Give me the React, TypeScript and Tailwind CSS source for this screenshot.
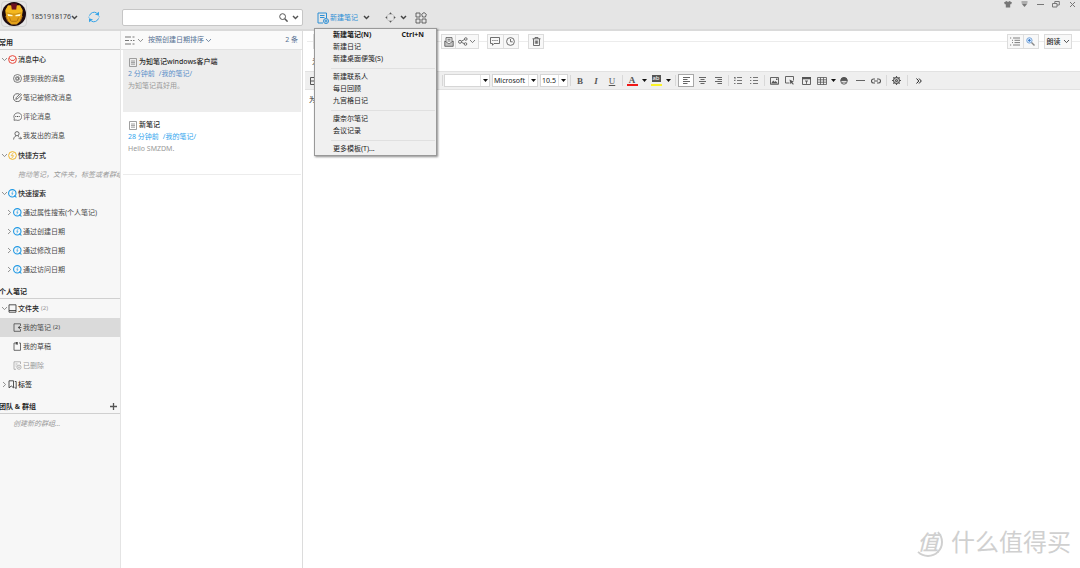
import React from "react";
import type { ReactNode } from "react";

type IconProps = { w?: number; h?: number; className?: string; sw?: number; children: ReactNode };

function Icon({ w = 10, h = 10, className = "", sw = 1, children }: IconProps) {
  return (
    <svg
      width={w}
      height={h}
      viewBox={`0 0 ${w} ${h}`}
      fill="none"
      stroke="currentColor"
      strokeWidth={sw}
      className={`shrink-0 ${className}`}
      aria-hidden="true"
    >
      {children}
    </svg>
  );
}

const Chevron = ({ bold = false }: { bold?: boolean }) => (
  <Icon w={7} h={5} sw={bold ? 1.4 : 0.8}>
    <path d="M1 1l2.5 2.6L6 1" />
  </Icon>
);

const ChevronRight = () => (
  <Icon w={5} h={7} sw={0.8}>
    <path d="M1 1l2.6 2.5L1 6" />
  </Icon>
);

const Caret = () => (
  <Icon w={5} h={3}>
    <path d="M0 0h5L2.5 3z" fill="#111" stroke="none" />
  </Icon>
);

const Avatar = () => (
  <svg width="24" height="24" viewBox="0 0 24 24" aria-hidden="true">
    <circle cx="12" cy="12" r="12" fill="#1c0a10" />
    <path d="M6 3.500h12l2.500 4.500-.5 7-2.500 5-3 2.500h-5l-3-2.500L4 15l-.5-7z" fill="#e3a018" />
    <path d="M3.500 8L6 3.500h3.200l.6 4.500 4.400 0 .6-4.500H18L20.500 8l-.3 3.500-6 1.500H9.800l-6-1.500z" fill="#f4b81e" />
    <path d="M9 1.500h6L14.200 7.500H9.800z" fill="#6d1122" />
    <path d="M5.500 12l5 .9v1.300l-4.400-.3zM18.500 12l-5 .9v1.300l4.400-.3z" fill="#fffbd6" />
    <path d="M4.500 10.800l6 1.400h3l6-1.400" fill="none" stroke="#a8690c" strokeWidth=".6" />
    <path d="M9.200 19.300h5.600M7.500 15.500l1.300 3.500M16.500 15.500l-1.300 3.500" fill="none" stroke="#a8690c" strokeWidth=".7" />
    <path d="M3.700 14l2 5.500M20.300 14l-2 5.500" stroke="#b5701a" strokeWidth=".9" />
  </svg>
);

const MessageCenterIcon = () => (
  <Icon w={9} h={9} className="text-[#e8483c]" sw={1}>
    <circle cx="4.500" cy="4.500" r="3.900" />
    <path d="M1 3.200l2 2.200h3L8 3.200" />
  </Icon>
);
const AtIcon = () => (
  <Icon w={9} h={9} sw={0.7}>
    <circle cx="4.500" cy="4.500" r="4" />
    <circle cx="4.300" cy="4.600" r="1.200" />
    <path d="M5.500 3.200v2.200c0 .8 1.100.6 1.100-.7A2.200 2.200 0 1 0 5.600 6.500" strokeWidth=".5" />
  </Icon>
);
const EditedIcon = () => (
  <Icon w={9} h={9} sw={0.8}>
    <path d="M6 1A4 4 0 1 0 8.300 4" />
    <path d="M2.800 6.300l.5-1.700 4-4 1.200 1.200-4 4z" />
  </Icon>
);
const CommentIcon = () => (
  <Icon w={9} h={9} sw={0.7}>
    <path d="M1 8.300l.3-1.900A4 3.800 0 1 1 3 8z" />
    <path d="M2.300 4.500h1M4 4.500h1M5.700 4.500h1" strokeWidth="1" />
  </Icon>
);
const PersonIcon = () => (
  <Icon w={9} h={9} sw={0.8}>
    <circle cx="4" cy="2.700" r="2.100" />
    <path d="M.6 8.500c.2-2 1-3 2.400-3.700M5 4.800l1 .9M5.500 7.200h3M7.300 6l1.200 1.200-1.200 1.200" />
  </Icon>
);
const BoltIcon = () => (
  <Icon w={9} h={9} className="text-[#f0b429]" sw={1}>
    <circle cx="4.500" cy="4.500" r="3.900" />
    <path d="M5.300 1.800L3.200 4.700h2.400L3.700 7.300" strokeWidth=".8" />
  </Icon>
);
const QuickSearchIcon = () => (
  <Icon w={9} h={9} className="text-[#1e98e4]" sw={1.1}>
    <circle cx="4.300" cy="4.300" r="3.700" />
    <path d="M5 2.200L3.700 4.400h1.300L3.800 6.400" strokeWidth=".6" />
    <path d="M6 6.800l2.500 1.600" />
  </Icon>
);
const FolderIcon = () => (
  <Icon w={9} h={9} sw={0.8}>
    <path d="M1 .8h7v5.700H1zM1 6.500v1.700h7V6.500" />
  </Icon>
);
const MyNotesIcon = () => (
  <Icon w={9} h={9} sw={0.8}>
    <path d="M7.500 3V.8H1v7.500h6.500V6M8.500 4.500H5.500" />
    <path d="M6.800 2.800L4.800 4.500l2 1.700z" fill="currentColor" stroke="none" />
  </Icon>
);
const DraftIcon = () => (
  <Icon w={9} h={9} sw={0.8}>
    <path d="M3.500 1H1v7.300h6.500V1H6" />
    <path d="M2.800 0v3l1-.7 1 .7V0z" fill="currentColor" stroke="none" />
  </Icon>
);
const DeletedIcon = () => (
  <Icon w={9} h={9} sw={0.7}>
    <path d="M3 8.300H1V.8h6.500V3M2.500 3h2M2.500 5h1" />
    <circle cx="6" cy="6.200" r="2.100" />
    <path d="M5 6.200h2" />
  </Icon>
);
const TagIcon = () => (
  <Icon w={9} h={9} sw={0.8}>
    <path d="M1 .8h4.500v7L3.300 6 1 7.800zM6.800 1.500h1.400v7L6.500 7.300" />
  </Icon>
);
const NoteIcon = () => (
  <Icon w={8} h={9} sw={0.8} className="text-[#888]">
    <path d="M.5.5h7v8h-7zM2 3h4M2 4.600h4M2 6.200h4" />
  </Icon>
);

type RowProps = {
  label: string;
  icon: ReactNode;
  child?: boolean;
  arrow?: "down" | "right";
  count?: string;
  active?: boolean;
  faded?: boolean;
};

function TreeRow({ label, icon, child, arrow, count, active, faded }: RowProps) {
  return (
    <li>
      <button
        className={`flex h-[19px] w-full items-center whitespace-nowrap ${child ? "pl-[5px]" : "font-medium"} ${
          active ? "bg-[#dadada]" : ""
        } ${faded ? "text-[#999]" : child ? "text-[#4a4a4a]" : "text-[#2a2a2a]"}`}
      >
        <span className="flex w-2 shrink-0 items-center justify-center text-[#777]">
          {arrow === "down" && <Chevron />}
          {arrow === "right" && <ChevronRight />}
        </span>
        {icon}
        <span className="pl-px">{label}</span>
        {count && <span className={`pl-0.5 text-[6px] font-normal ${child ? "" : "text-[#999]"}`}>{count}</span>}
      </button>
    </li>
  );
}

function Heading({ children, first }: { children: ReactNode; first?: boolean }) {
  return (
    <h2
      className={`-ml-px flex items-end justify-between border-b border-[#d0d0d0] font-bold text-[#2a2a2a] ${
        first ? "h-[19px]" : "h-5"
      }`}
    >
      {children}
    </h2>
  );
}

function Hint({ children }: { children: ReactNode }) {
  return <p className="h-[19px] overflow-hidden leading-[19px] whitespace-nowrap text-[#999] italic">{children}</p>;
}

function Sidebar() {
  return (
    <nav className="w-[121px] shrink-0 overflow-hidden border-r border-[#e4e4e4] bg-[#f7f7f7] leading-[13px]">
      <Heading first>常用</Heading>
      <ul>
        <TreeRow label="消息中心" icon={<MessageCenterIcon />} arrow="down" />
        <TreeRow label="提到我的消息" icon={<AtIcon />} child />
        <TreeRow label="笔记被修改消息" icon={<EditedIcon />} child />
        <TreeRow label="评论消息" icon={<CommentIcon />} child />
        <TreeRow label="我发出的消息" icon={<PersonIcon />} child />
      </ul>
      <ul className="pt-px">
        <TreeRow label="快捷方式" icon={<BoltIcon />} arrow="down" />
        <li className="pl-[18px]">
          <Hint>拖动笔记，文件夹，标签或者群组</Hint>
        </li>
        <TreeRow label="快速搜索" icon={<QuickSearchIcon />} arrow="down" />
        <TreeRow label="通过属性搜索(个人笔记)" icon={<QuickSearchIcon />} child arrow="right" />
        <TreeRow label="通过创建日期" icon={<QuickSearchIcon />} child arrow="right" />
        <TreeRow label="通过修改日期" icon={<QuickSearchIcon />} child arrow="right" />
        <TreeRow label="通过访问日期" icon={<QuickSearchIcon />} child arrow="right" />
      </ul>
      <Heading>个人笔记</Heading>
      <ul>
        <TreeRow label="文件夹" icon={<FolderIcon />} arrow="down" count="(2)" />
        <TreeRow label="我的笔记" icon={<MyNotesIcon />} child active count="(2)" />
        <TreeRow label="我的草稿" icon={<DraftIcon />} child />
        <TreeRow label="已删除" icon={<DeletedIcon />} child faded />
        <TreeRow label="标签" icon={<TagIcon />} arrow="right" />
      </ul>
      <Heading>
        <span>团队 &amp; 群组</span>
        <button aria-label="添加群组" className="px-[3px] pb-[3px] text-[#555]">
          <Icon w={7} h={7} sw={1.3}>
            <path d="M3.500 0v7M0 3.500h7" />
          </Icon>
        </button>
      </Heading>
      <div className="pl-[13px]">
        <Hint>创建新的群组...</Hint>
      </div>
    </nav>
  );
}

function TopBar() {
  return (
    <header className="flex h-[31px] shrink-0 border-b-2 border-[#dadada] bg-[#e5e5e5]">
      <div className="flex w-[122px] shrink-0 items-start">
        <button aria-label="头像" className="mt-px ml-px rounded-sm border border-[#d2d2d2]">
          <Avatar />
        </button>
        <button className="mt-[11px] ml-1 flex items-center text-[#444]">
          1851918176
          <Chevron bold />
        </button>
        <button aria-label="同步" className="mt-[11px] ml-[10px] text-[#35a4e8]">
          <Icon w={12} h={12} sw={1}>
            <path d="M1.500 4.600A4.900 4.900 0 0 1 8.600 1.900M10.500 7.400A4.900 4.900 0 0 1 3.400 10.100" />
            <path d="M.9 5.700V6.600M11.100 6.300V5.400" />
            <path d="M11 .8v3.900L7 3.400zM1 11.200V7.300l4 1.300z" fill="currentColor" stroke="none" />
          </Icon>
        </button>
      </div>
      <div className="mt-[9px] flex h-[17px] w-[181px] shrink-0 items-center rounded-xs border border-[#c6c6c6] bg-white text-[#555]">
        <input aria-label="搜索" className="h-3 min-w-0 flex-1 px-1 outline-none" />
        <button aria-label="搜索笔记">
          <Icon w={9} h={9} sw={1}>
            <circle cx="3.600" cy="3.600" r="2.900" />
            <path d="M5.800 5.800l2.800 2.800" strokeWidth="1.500" />
          </Icon>
        </button>
        <button aria-label="搜索选项" className="pr-[3px] pl-1">
          <Chevron bold />
        </button>
      </div>
      <div className="flex items-center pt-[6px] pl-[14px] text-[#555]">
        <button className="flex items-center gap-px text-[#2d8fd5]">
          <Icon w={12} h={12} sw={1}>
            <path d="M6 11H1V1h8.500v5M3 3.500h4.500M3 5.500h4.500" />
            <circle cx="9" cy="9" r="2.500" />
            <path d="M9 7.500v3M7.500 9h3" />
          </Icon>
          新建笔记
        </button>
        <button aria-label="新建选项" className="ml-[5px] text-[#444]">
          <Chevron bold />
        </button>
        <button aria-label="移动" className="ml-[15px]">
          <Icon w={11} h={11} sw={0.9}>
            <path d="M2.400 3.400l1-1M7.600 2.400l1 1M2.400 7.600l1 1M8.600 7.600l-1 1" stroke="#999" />
            <path d="M5.500.3l1.500 1.900H4zM5.500 10.700L7 8.800H4zM.3 5.500L2.200 4v3zM10.700 5.500L8.800 4v3z" fill="currentColor" stroke="none" />
          </Icon>
        </button>
        <button aria-label="移动选项" className="ml-1 text-[#444]">
          <Chevron bold />
        </button>
        <button aria-label="应用" className="ml-2">
          <Icon w={12} h={12} sw={0.9}>
            <path d="M1 1h4v4H1zM1 7h4v4H1zM7 7h4v4H7zM9 .5l2.300 1.800-.8 2.700h-3l-.8-2.700z" />
          </Icon>
        </button>
      </div>
      <div className="ml-auto flex h-2 text-[#777]">
        <button aria-label="皮肤" className="flex w-4 items-center justify-center">
          <Icon w={8} h={7}>
            <path d="M2.500 0L0 1.500l1 2 .8-.5v3.500h4.400V3l.8.500 1-2L5.500 0 4 1z" fill="currentColor" stroke="none" />
          </Icon>
        </button>
        <button aria-label="菜单" className="flex w-4 items-center justify-center">
          <Icon w={7} h={7}>
            <path d="M.5 1h6" />
            <path d="M.5 2.500h6L3.500 6z" fill="currentColor" stroke="none" />
          </Icon>
        </button>
        <button aria-label="最小化" className="flex w-4 items-center justify-center">
          <Icon w={7} h={7}>
            <path d="M0 3.500h7" />
          </Icon>
        </button>
        <button aria-label="还原" className="flex w-4 items-center justify-center">
          <Icon w={8} h={7}>
            <path d="M.5 2.500h4.500v3.500H.5zM2.800 2.500V.5h4.500V4H5" />
          </Icon>
        </button>
        <button aria-label="关闭" className="flex w-4 items-center justify-center">
          <Icon w={7} h={7}>
            <path d="M1 1l5 5M6 1L1 6" />
          </Icon>
        </button>
      </div>
    </header>
  );
}

type Note = { title: string; time: string; folder: string; preview: string; active?: boolean };

const notes: Note[] = [
  { title: "为知笔记windows客户端", time: "2 分钟前", folder: "/我的笔记/", preview: "为知笔记真好用。", active: true },
  { title: "新笔记", time: "28 分钟前", folder: "/我的笔记/", preview: "Hello SMZDM." },
];

function NoteList() {
  return (
    <section className="flex w-[182px] shrink-0 flex-col border-r border-[#dcdcdc] bg-white">
      <div className="flex h-[19px] items-center border-b border-[#e2e2e2] bg-[#fafafa] px-1 text-[#567193]">
        <button aria-label="视图" className="flex items-center gap-0.5 text-[#777]">
          <Icon w={10} h={9} sw={1}>
            <path d="M0 1h6M0 4.500h4M0 8h6" />
            <path d="M7.500 1h2M5.500 4.500h1.500M8 4.500h1.500M7.500 8h2" />
          </Icon>
          <Chevron />
        </button>
        <button className="ml-1 flex items-center gap-px">
          按照创建日期排序
          <Chevron />
        </button>
        <span className="ml-auto">2 条</span>
      </div>
      <div className="flex flex-col gap-px pr-px pl-0.5">
        {notes.map((n) => (
          <article
            key={n.title}
            className={`h-[62px] px-[5px] pt-1.5 leading-3 ${n.active ? "bg-[#ededed]" : "border-b border-[#ececec]"}`}
          >
            <h3 className="flex items-center gap-0.5 pl-px font-medium text-[#2a2a2a]">
              <NoteIcon />
              {n.title}
            </h3>
            <p className={`flex gap-1 ${n.active ? "text-[#5b8fc9]" : "text-[#2fa5ee]"}`}>
              <span>{n.time}</span>
              <span>{n.folder}</span>
            </p>
            <p className="text-[#999]">{n.preview}</p>
          </article>
        ))}
      </div>
    </section>
  );
}

const Rule = ({ className }: { className: string }) => <span className={`h-px bg-[#ececec] ${className}`} />;

function Group({ children, className = "" }: { children: ReactNode; className?: string }) {
  return (
    <div className={`flex h-[15px] divide-x divide-[#dedede] border border-[#dcdcdc] bg-[#f8f8f8] text-[#606060] ${className}`}>
      {children}
    </div>
  );
}

function Btn({ label, children, className = "" }: { label: string; children: ReactNode; className?: string }) {
  return (
    <button aria-label={label} className={`flex flex-1 items-center justify-center ${className}`}>
      {children}
    </button>
  );
}

function NoteActions() {
  return (
    <div className="flex h-[18px] items-center pt-[3px] pl-1">
      <Rule className="w-1.5" />
      <Group className="w-[121px]">
        <Btn label="编辑">
          <EditedIcon />
        </Btn>
        <Btn label="标记">
          <TagIcon />
        </Btn>
      </Group>
      <Rule className="w-[7px]" />
      <Group className="w-[38px]">
        <Btn label="邮件" className="max-w-[15px]">
          <Icon w={10} h={10} sw={0.9}>
            <path d="M.8 4v5.300h8.400V4L5 7zM2 4.800V.6h6v4.200M3.500 2.300h3M3.500 4h3" />
            <path d="M.8 4.500L5 7.500l4.200-3v4.800H.8z" fill="currentColor" fillOpacity=".35" stroke="none" />
          </Icon>
        </Btn>
        <Btn label="分享" className="gap-px px-0.5">
          <Icon w={10} h={9} sw={0.9}>
            <circle cx="2" cy="4.800" r="1.500" />
            <circle cx="7.800" cy="2" r="1.300" />
            <circle cx="7.500" cy="7" r="1.300" />
            <path d="M3.400 4.200l3.200-1.700M3.400 5.300l2.800 1.300" />
          </Icon>
          <Chevron />
        </Btn>
      </Group>
      <Rule className="w-2" />
      <Group className="w-8">
        <Btn label="评论">
          <Icon w={10} h={9} sw={0.9}>
            <path d="M.5.5h9v6H4L2.500 8.300V6.500h-2z" />
            <path d="M2.300 3.500h1.200M4.400 3.500h1.200M6.500 3.500h1.200" />
          </Icon>
        </Btn>
        <Btn label="历史">
          <Icon w={9} h={9} sw={0.9}>
            <circle cx="4.500" cy="4.500" r="3.900" />
            <path d="M4.500 2v2.800h2.200" />
          </Icon>
        </Btn>
      </Group>
      <Rule className="w-[9px]" />
      <Group className="w-4">
        <Btn label="删除">
          <Icon w={9} h={9} sw={0.9}>
            <path d="M.5 1.800h8M3 1.800V.5h3v1.300M1.500 1.800v6.700h6V1.800M3.300 3.500v3.300M4.500 3.500v3.300M5.700 3.500v3.300" />
          </Icon>
        </Btn>
      </Group>
      <Rule className="flex-1" />
      <Group className="w-8">
        <Btn label="大纲">
          <Icon w={10} h={9} sw={0.8}>
            <path d="M0 1h1.200M3 1H10M2 3.300h1M4.500 3.300H10M2 5.600h1M4.500 5.600H10M0 8h1.200M3 8H10" />
          </Icon>
        </Btn>
        <Btn label="放大">
          <Icon w={9} h={9} sw={1}>
            <circle cx="3.400" cy="3.400" r="2.700" fill="#d8eaff" stroke="#7fa9d8" />
            <path d="M2 3.400h2.800M3.400 2v2.800" stroke="#3c7cc8" />
            <path d="M5.500 5.500l3 3" stroke="#888" strokeWidth="1.400" />
          </Icon>
        </Btn>
      </Group>
      <Rule className="w-[5px]" />
      <Group className="w-7">
        <button className="flex flex-1 items-center justify-center gap-0.5 font-medium text-[#2a2a2a]">
          朗读
          <Chevron />
        </button>
      </Group>
      <Rule className="w-2" />
    </div>
  );
}

function Picker({ label, value, className }: { label: string; value: string; className: string }) {
  return (
    <label className={`flex h-[13px] items-center border border-[#d6d6d6] bg-white ${className}`}>
      <select aria-label={label} defaultValue={value} className="h-full min-w-0 flex-1 appearance-none pl-px outline-none">
        <option value={value}>{value}</option>
      </select>
      <span className="flex h-full w-[9px] shrink-0 items-center justify-center border-l border-[#e4e4e4]">
        <Caret />
      </span>
    </label>
  );
}

function Tool({ label, children, active }: { label: string; children: ReactNode; active?: boolean }) {
  return (
    <button
      aria-label={label}
      className={`flex h-[13px] w-4 shrink-0 items-center justify-center ${active ? "border border-[#a8a8a8] bg-white" : ""}`}
    >
      {children}
    </button>
  );
}

const Drop = ({ label, className = "w-2" }: { label: string; className?: string }) => (
  <button aria-label={label} className={`flex h-[13px] shrink-0 items-center justify-center ${className}`}>
    <Caret />
  </button>
);

const Sep = ({ className = "w-1" }: { className?: string }) => (
  <span className={`flex shrink-0 justify-center ${className}`}>
    <span className="h-[11px] w-px bg-[#d8d8d8]" />
  </span>
);

function FormatBar() {
  return (
    <div className="ml-0.5 flex h-[19px] items-center overflow-hidden border-y border-[#e2e2e2] bg-[#efefef] text-[#555]">
      <div className="flex w-[136px] shrink-0">
        <Tool label="保存">
          <Icon w={7} h={8}>
            <path d="M.5.5h6v7h-6zM.5 4h6" />
          </Icon>
        </Tool>
      </div>
      <Sep className="w-[3px]" />
      <div className="flex shrink-0 gap-0.5 text-[#222]">
        <Picker label="样式" value="" className="w-[46px]" />
        <Picker label="字体" value="Microsoft" className="w-[46px]" />
        <Picker label="字号" value="10.5" className="w-7" />
      </div>
      <Sep />
      <Tool label="粗体">
        <b className="font-['Liberation_Serif',serif] text-[9px]">B</b>
      </Tool>
      <Tool label="斜体">
        <i className="font-['Liberation_Serif',serif] text-[9px] font-bold">I</i>
      </Tool>
      <Tool label="下划线">
        <u className="font-['Liberation_Serif',serif] text-[9px]">U</u>
      </Tool>
      <Sep />
      <Tool label="文字颜色">
        <span className="flex h-[11px] w-[11px] items-center justify-center border-b-2 border-[#f01818] font-['Liberation_Serif',serif] text-[9px] leading-[8px] font-bold">
          A
        </span>
      </Tool>
      <Drop label="选择文字颜色" />
      <Tool label="突出显示">
        <span className="flex h-[11px] w-[11px] flex-col items-center border-b-2 border-[#fbf32a]">
          <span className="flex h-[7px] w-[9px] items-center justify-center bg-[#555] text-[6px] leading-[7px] text-white">ab</span>
        </span>
      </Tool>
      <Drop label="选择突出显示颜色" />
      <Sep className="w-1.5" />
      <Tool label="左对齐" active>
        <Icon w={7} h={7} sw={0.9}>
          <path d="M0 .5h7M0 2.500h4.500M0 4.500h7M0 6.500h4.500" />
        </Icon>
      </Tool>
      <Tool label="居中">
        <Icon w={7} h={7} sw={0.9}>
          <path d="M0 .5h7M1.500 2.500h4M0 4.500h7M1.500 6.500h4" />
        </Icon>
      </Tool>
      <Tool label="右对齐">
        <Icon w={7} h={7} sw={0.9}>
          <path d="M0 .5h7M2.500 2.500H7M0 4.500h7M2.500 6.500H7" />
        </Icon>
      </Tool>
      <Sep />
      <Tool label="编号列表">
        <Icon w={8} h={7} sw={0.8}>
          <path d="M0 .5h1.500M3 .5h5M0 3.500h1.500M3 3.500h5M0 6.500h1.500M3 6.500h5M1 .5v1.800" />
        </Icon>
      </Tool>
      <Tool label="项目列表">
        <Icon w={8} h={7} sw={0.8}>
          <path d="M0 .5h1.300M3 .5h5M0 3.500h1.300M3 3.500h5M0 6.500h1.300M3 6.500h5" />
        </Icon>
      </Tool>
      <Sep />
      <Tool label="图片">
        <Icon w={9} h={8} sw={0.9}>
          <path d="M.5.5h8v6.800h-8z" />
          <path d="M1 6.500l2.200-3 1.500 1.500 1-1L8 6.500zM6 1.500h1.500V3H6z" fill="currentColor" stroke="none" />
        </Icon>
      </Tool>
      <Tool label="截图">
        <Icon w={10} h={9} sw={0.9}>
          <path d="M4.500 7H.5V.5h8v4" />
          <path d="M4.500 3.500l4.500 2.200-1.700.6 1.500 1.800-.8.7-1.500-1.800-1 1.300z" fill="currentColor" stroke="none" />
        </Icon>
      </Tool>
      <Tool label="模板">
        <Icon w={9} h={8} sw={0.9}>
          <path d="M.5.5h8v7h-8zM3 4h3M4.500 4v2.800" />
          <path d="M0 0h9v2.300H0z" fill="currentColor" stroke="none" />
        </Icon>
      </Tool>
      <Tool label="表格">
        <Icon w={10} h={8} sw={0.8}>
          <path d="M.5.5h9v7h-9zM.5 2.800h9M.5 5.200h9M3.500.5v7M6.500.5v7" />
        </Icon>
      </Tool>
      <Drop label="表格选项" className="w-1.5" />
      <Tool label="表情">
        <Icon w={8} h={8} sw={0.9}>
          <circle cx="4" cy="4" r="3.200" />
          <path d="M.8 3.600A3.200 3.200 0 0 1 7.200 3.600z" fill="currentColor" />
          <path d="M2.300 5.500h1.200M4.500 5.500h1.200" />
        </Icon>
      </Tool>
      <Tool label="分割线">
        <Icon w={9} h={3} sw={0.9}>
          <path d="M0 1.500h9" />
        </Icon>
      </Tool>
      <Tool label="链接">
        <Icon w={10} h={6} sw={1.1}>
          <path d="M4 1H2.500a2 2 0 0 0 0 4H4M6 1h1.500a2 2 0 0 1 0 4H6M3 3h4" />
        </Icon>
      </Tool>
      <Sep />
      <Tool label="设置">
        <Icon w={9} h={9} sw={1.1}>
          <circle cx="4.500" cy="4.500" r="2.900" />
          <circle cx="4.500" cy="4.500" r="1" />
          <path d="M4.500 0v1.600M4.500 7.400V9M0 4.500h1.600M7.400 4.500H9M1.300 1.300l1.100 1.100M6.600 6.600l1.100 1.100M7.700 1.300L6.600 2.400M2.400 6.600L1.300 7.700" />
        </Icon>
      </Tool>
      <Sep className="w-[7px]" />
      <Tool label="更多">
        <Icon w={6} h={6} sw={1} className="text-[#222]">
          <path d="M.5.5L2.800 3 .5 5.500M3 .5L5.300 3 3 5.500" />
        </Icon>
      </Tool>
    </div>
  );
}

const menuGroups: { label: string; shortcut?: string }[][] = [
  [{ label: "新建笔记(N)", shortcut: "Ctrl+N" }, { label: "新建日记" }, { label: "新建桌面便笺(S)" }],
  [{ label: "新建联系人" }, { label: "每日回顾" }, { label: "九宫格日记" }],
  [{ label: "康奈尔笔记" }, { label: "会议记录" }],
  [{ label: "更多模板(T)..." }],
];

function NewNoteMenu() {
  return (
    <div
      role="menu"
      className="absolute top-7 left-[314px] w-[123px] border border-[#999] bg-[#f0f0f0] text-[#1a1a1a] shadow-[1px_1px_2px_rgba(0,0,0,0.45)]"
    >
      {menuGroups.map((group, i) => (
        <div key={i}>
          {i > 0 && (
            <div className="flex h-1.5 items-center pr-px pl-4">
              <span className="h-px flex-1 bg-[#e0e0e0]" />
            </div>
          )}
          {group.map((item) => (
            <button
              key={item.label}
              role="menuitem"
              className={`flex h-3 w-full items-center justify-between pr-3 pl-[18px] ${item.shortcut ? "font-bold" : ""}`}
            >
              <span>{item.label}</span>
              {item.shortcut && <span>{item.shortcut}</span>}
            </button>
          ))}
        </div>
      ))}
    </div>
  );
}

function Watermark() {
  return (
    <div className="absolute right-[9px] bottom-[10px] flex items-center gap-2 text-[#d0d0d0]">
      <span className="flex h-[30px] w-[30px] items-center justify-center rounded-full border-2 border-t-transparent border-r-[#d0d0d0] border-b-[#d0d0d0] border-l-transparent text-[21px] leading-none font-medium italic">
        值
      </span>
      <span className="text-[24px] leading-8">什么值得买</span>
    </div>
  );
}

export default function App() {
  return (
    <div className="relative flex min-h-screen flex-col overflow-hidden bg-white font-['Noto_Sans','Noto_Sans_CJK_SC',sans-serif] text-[7px] leading-3">
      <TopBar />
      <div className="flex flex-1">
        <Sidebar />
        <NoteList />
        <main className="min-w-0 flex-1">
          <NoteActions />
          <h1 className="h-[22px] pt-1 pl-[9px] leading-[18px] text-[#333]">为知笔记windows客户端</h1>
          <FormatBar />
          <p className="pt-1 pl-1.5 text-[#222]">为知笔记真好用。</p>
        </main>
      </div>
      <NewNoteMenu />
      <Watermark />
    </div>
  );
}
